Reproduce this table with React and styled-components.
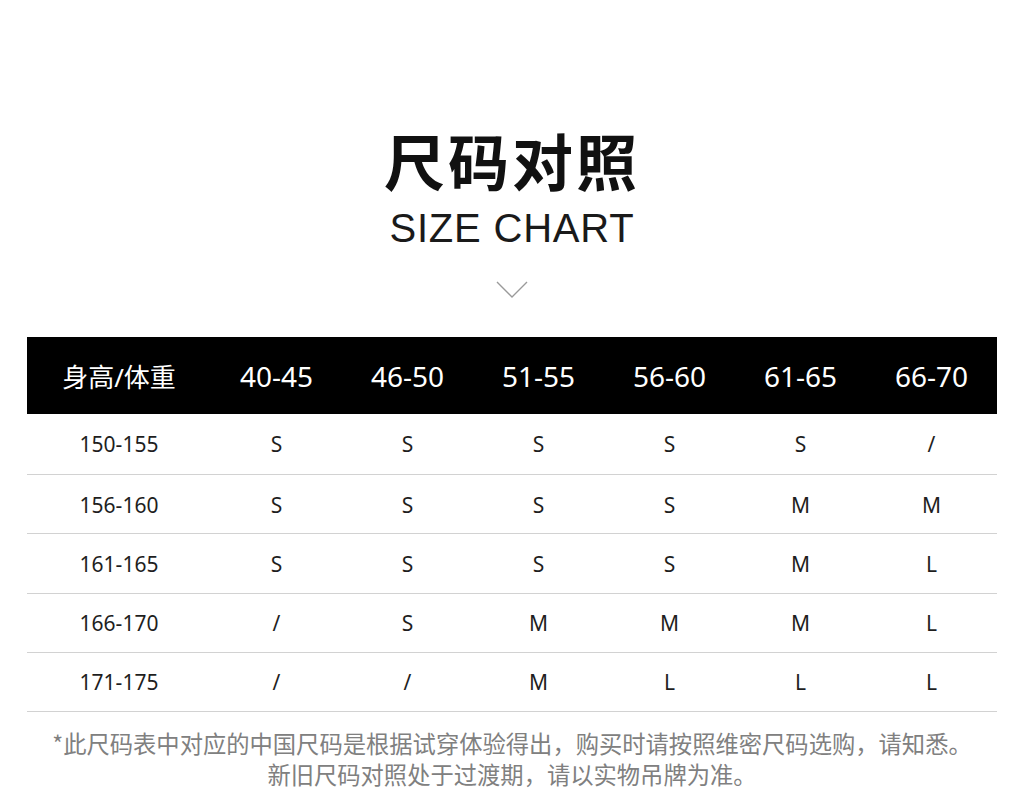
import React from 'react'
import styled, { createGlobalStyle } from 'styled-components'

const GlobalStyle = createGlobalStyle`
    html, body {
        margin: 0;
        padding: 0;
        background: #fff;
        font-family: "Noto Sans", "Noto Sans CJK SC", sans-serif;
    }
`

const heads = ['40-45', '46-50', '51-55', '56-60', '61-65', '66-70']

const rows = [
    ['150-155', 'S', 'S', 'S', 'S', 'S', '/'],
    ['156-160', 'S', 'S', 'S', 'S', 'M', 'M'],
    ['161-165', 'S', 'S', 'S', 'S', 'M', 'L'],
    ['166-170', '/', 'S', 'M', 'M', 'M', 'L'],
    ['171-175', '/', '/', 'M', 'L', 'L', 'L'],
]

const SizeChart = () => {
    return (
        <Page>
            <GlobalStyle />
            <Title>尺码对照</Title>
            <Subtitle>SIZE CHART</Subtitle>
            <Chevron width="32" height="18" viewBox="0 0 32 18">
                <polyline points="1,1 16,16 31,1" fill="none" stroke="#9a9a9a" strokeWidth="1.4" />
            </Chevron>
            <Table>
                <HeadRow>
                    <HeadCell $cjk>身高/体重</HeadCell>
                    {heads.map(h => <HeadCell key={h}>{h}</HeadCell>)}
                </HeadRow>
                {rows.map((r, n) => (
                    <BodyRow key={r[0]} $first={n === 0}>
                        {r.map((c, i) => <Cell key={i}>{c}</Cell>)}
                    </BodyRow>
                ))}
            </Table>
            <Note>
                <p>*此尺码表中对应的中国尺码是根据试穿体验得出，购买时请按照维密尺码选购，请知悉。</p>
                <p>新旧尺码对照处于过渡期，请以实物吊牌为准。</p>
            </Note>
        </Page>
    )
}
export default SizeChart

const Page = styled.div`
    width: 1024px;
    height: 801px;
    overflow: hidden;
    display: flex;
    flex-direction: column;
    align-items: center;
    padding-top: 124px;
    box-sizing: border-box;
`

const Title = styled.h1`
    margin: 0;
    font-family: "Noto Sans CJK SC", sans-serif;
    font-size: 61px;
    font-weight: 700;
    line-height: 72px;
    letter-spacing: 3px;
    color: #111;
`

const Subtitle = styled.h2`
    margin: 8px 0 0;
    font-family: "Liberation Sans", Arial, sans-serif;
    font-size: 40px;
    font-weight: 400;
    line-height: 48px;
    letter-spacing: 0.8px;
    color: #1a1a1a;
`

const Chevron = styled.svg`
    display: block;
    margin-top: 29px;
`

const Table = styled.div`
    width: 970px;
    margin-top: 38px;
`

const HeadRow = styled.div`
    display: grid;
    grid-template-columns: 184px repeat(6, 1fr);
    align-items: center;
    height: 77px;
    background: #000;
`

const HeadCell = styled.div`
    text-align: center;
    color: #fff;
    font-size: ${p => (p.$cjk ? '26px' : '28px')};
    font-weight: 400;
`

const BodyRow = styled.div`
    display: grid;
    grid-template-columns: 184px repeat(6, 1fr);
    align-items: center;
    height: ${p => (p.$first ? '61px' : '59.25px')};
    padding-top: ${p => (p.$first ? '0' : '1px')};
    border-bottom: 1.5px solid #d2d2d2;
    box-sizing: border-box;
`

const Cell = styled.div`
    text-align: center;
    color: #1e1e1e;
    font-size: 21px;
`

const Note = styled.div`
    margin-top: 16px;
    text-align: center;
    color: #808080;
    font-family: "Noto Sans CJK SC", sans-serif;
    font-size: 23.3px;
    line-height: 31px;

    p {
        margin: 0;
    }
`
